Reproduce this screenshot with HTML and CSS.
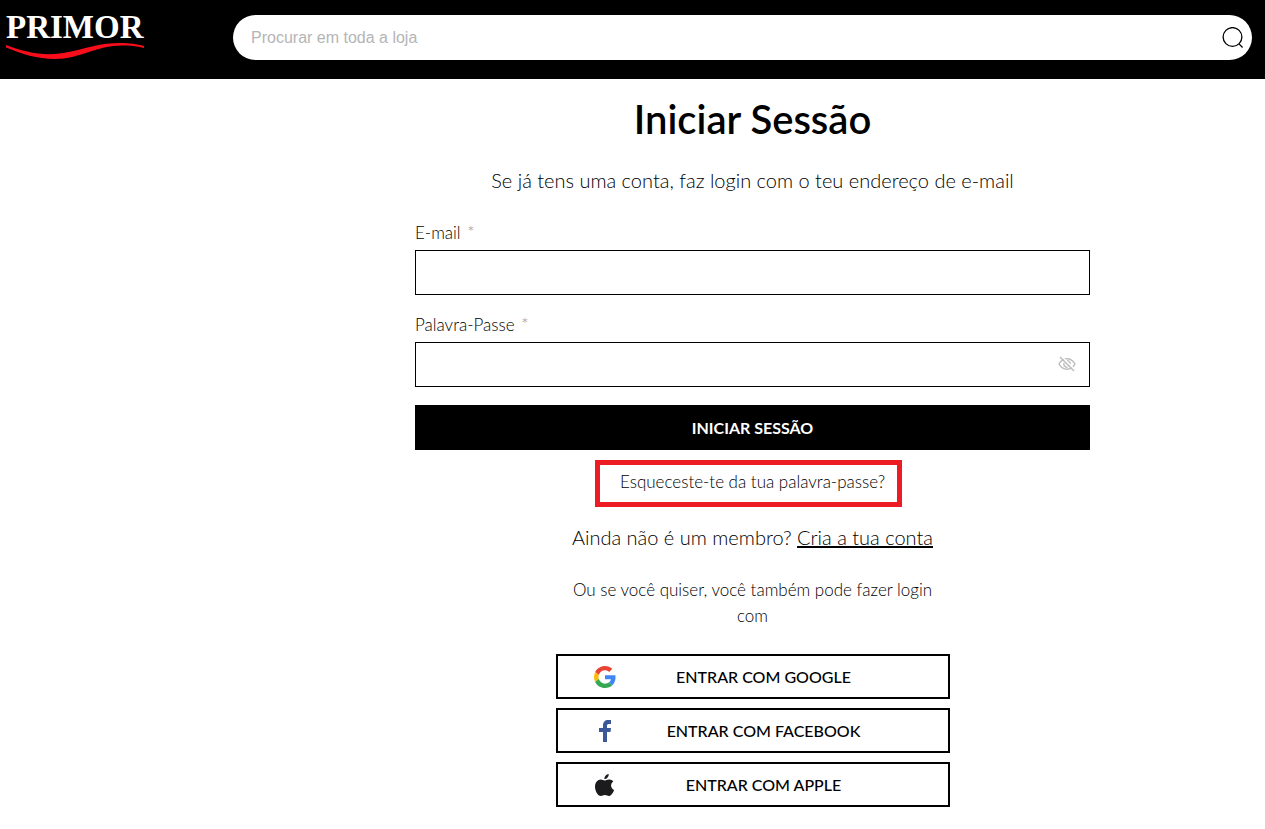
FILE: index.html
```html
<!DOCTYPE html>
<html lang="pt">
  <head>
    <meta charset="UTF-8" />
    <meta name="viewport" content="width=device-width, initial-scale=1.0" />
    <title>Iniciar Sessão</title>
    <link rel="stylesheet" href="styles.css">
  </head>
  <body>
    <header class="header">
      <a class="logo" href="#">
        <span class="logo-name">PRIMOR</span>
        <svg class="logo-wave" viewBox="0 0 138 17" aria-hidden="true">
          <path d="M0 2C16 8 31 12 49 11C72 9 88 0 114 0C124 0 131 1 138 3V5C130 3 124 2.500 116 2.500C90 2.500 74 16 49 16C31 16 16 11 0 4.500Z" fill="#f80d1b" />
        </svg>
      </a>
      <form class="search">
        <input class="search-input" type="search" placeholder="Procurar em toda a loja" aria-label="Procurar em toda a loja" />
        <button class="search-button" type="button" aria-label="Procurar">
          <svg width="22" height="22" viewBox="0 0 22 22" fill="none" stroke="#000" stroke-width="1.3">
            <circle cx="10.5" cy="10" r="9.4" />
            <path d="M17 16.900L20.600 20.500" />
          </svg>
        </button>
      </form>
    </header>

    <main class="main">
      <h1>Iniciar Sessão</h1>
      <p class="intro">Se já tens uma conta, faz login com o teu endereço de e-mail</p>

      <form class="login-form">
        <label for="email">E-mail <span class="required">*</span></label>
        <input class="field" type="email" id="email" required />

        <label for="password">Palavra-Passe <span class="required">*</span></label>
        <div class="password-box">
          <input class="field" type="password" id="password" required />
          <button class="toggle" type="button" aria-label="Mostrar palavra-passe">
            <svg width="18" height="16" viewBox="0 0 18 16" fill="none" stroke="#bdbdbd" stroke-width="1.5">
              <path d="M1 8C3 4.4 5.8 2.8 9 2.8S15 4.4 17 8C15 11.600 12.200 13.200 9 13.200S3 11.600 1 8Z" />
              <path d="M9 4.800A3.200 3.200 0 0 1 11.400 10.100M9.500 11.200A3.200 3.200 0 0 1 6 7" />
              <path stroke="#fff" d="M3.200 0L17 14" />
              <path d="M2 1L16 15" />
            </svg>
          </button>
        </div>

        <button class="submit" type="button">INICIAR SESSÃO</button>
      </form>

      <a class="forgot" href="#">Esqueceste-te da tua palavra-passe?</a>
      <p class="signup">Ainda não é um membro? <a href="#">Cria a tua conta</a></p>

      <div class="social">
        <p class="social-text">Ou se você quiser, você também pode fazer login com</p>
        <button class="social-button" type="button">
          <svg width="22" height="22" viewBox="0 0 48 48">
            <path fill="#EA4335" d="M24 9.500c3.540 0 6.710 1.220 9.210 3.600l6.850-6.850C35.900 2.380 30.470 0 24 0 14.620 0 6.510 5.380 2.560 13.220l7.980 6.190C12.430 13.720 17.740 9.500 24 9.500z" />
            <path fill="#4285F4" d="M46.980 24.550c0-1.570-.150-3.090-.380-4.550H24v9.020h12.940c-.580 2.960-2.260 5.480-4.780 7.180l7.730 6c4.510-4.180 7.090-10.360 7.090-17.650z" />
            <path fill="#FBBC05" d="M10.530 28.590A14.500 14.500 0 0 1 9.770 24c0-1.600.270-3.140.760-4.590l-7.980-6.190A23.900 23.900 0 0 0 0 24c0 3.880.920 7.540 2.560 10.780l7.970-6.190z" />
            <path fill="#34A853" d="M24 48c6.480 0 11.930-2.130 15.890-5.810l-7.730-6c-2.150 1.450-4.920 2.300-8.160 2.300-6.260 0-11.570-4.220-13.470-9.910l-7.980 6.190C6.510 42.620 14.620 48 24 48z" />
          </svg>
          <span>ENTRAR COM GOOGLE</span>
        </button>
        <button class="social-button" type="button">
          <svg width="22" height="22" viewBox="0 0 22 22">
            <path fill="#3b5998" d="M9 22V12H5V8H9V5.500C9 2 11 0 14.200 0H17V4H15C13.600 4 13 4.600 13 6V8H17L16.500 12H13V22Z" />
          </svg>
          <span>ENTRAR COM FACEBOOK</span>
        </button>
        <button class="social-button" type="button">
          <svg width="22" height="22" viewBox="0 0 22 22">
            <path fill="#1b1b1d" d="M14.700 0C14.900 2.800 12.800 5.100 10.400 5.100C10.100 2.500 12.400.300 14.700 0Z" />
            <path fill="#1b1b1d" d="M10.700 6.500C11.600 6.500 13.200 5.300 15.300 5.400C17.100 5.500 18.500 6.200 19.400 7.500C16 9.600 16.400 14.500 20.100 16C19.300 18.300 17.400 21.800 15.300 22C13.700 22.100 12.900 21 11 21C9.100 21 8.200 22 6.800 22C3.900 22 1 17 1 12.700C1 8.300 3.800 5.600 6.700 5.500C8.400 5.500 9.700 6.500 10.700 6.500Z" />
          </svg>
          <span>ENTRAR COM APPLE</span>
        </button>
      </div>
    </main>
  </body>
</html>
```
FILE: styles.css
```css
* {
  box-sizing: border-box;
}

body {
  margin: 0;
  background-color: #fff;
  color: #000;
  font-family: Lato, "Open Sans", sans-serif;
  font-size: 17px;
  font-weight: 300;
  line-height: 26px;
}

button {
  font-family: inherit;
  font-size: 16px;
  cursor: pointer;
}

.header {
  display: flex;
  align-items: flex-start;
  gap: 89px;
  padding: 15px 13px 19px 6px;
  background-color: #000;
}

.logo {
  width: 138px;
  color: #fff;
  text-decoration: none;
}

.logo-name {
  display: block;
  margin-bottom: 4px;
  font-family: "Liberation Serif", serif;
  font-size: 33px;
  font-weight: bold;
  line-height: 24px;
}

.logo-wave {
  display: block;
  width: 138px;
  height: 17px;
}

.search {
  display: flex;
  flex: 1;
  align-items: center;
  height: 45px;
  padding: 0 8px 0 18px;
  border-radius: 23px;
  background-color: #fff;
}

.search-input {
  flex: 1;
  padding: 0;
  border: none;
  outline: none;
  font-family: "Liberation Sans", Arial, sans-serif;
  font-size: 16px;
}

.search-input::placeholder {
  color: #b5b5b5;
}

.search-button,
.toggle {
  display: flex;
  padding: 0;
  border: none;
  background: none;
}

.main {
  display: flex;
  flex-direction: column;
  align-items: center;
  padding: 16px 0 22px 240px;
}

h1 {
  margin: 0;
  font-size: 40px;
  font-weight: 600;
  line-height: 48px;
}

.intro {
  margin: 24px 0 27px;
  font-size: 20px;
}

.login-form {
  width: 100%;
  max-width: 675px;
}

label {
  display: block;
  margin-bottom: 4px;
}

.required {
  margin-left: 2px;
  color: #999;
}

.field {
  display: block;
  width: 100%;
  height: 45px;
  margin-bottom: 17px;
  padding: 0 12px;
  border: 1px solid #000;
  border-radius: 0;
  font-size: 16px;
}

.password-box {
  position: relative;
  margin-bottom: 18px;
}

.toggle {
  position: absolute;
  top: 14px;
  right: 14px;
}

.submit {
  display: block;
  width: 100%;
  height: 45px;
  border: none;
  background-color: #000;
  color: #fff;
  font-weight: 700;
}

.forgot {
  margin: 10px 8px 0 0;
  padding: 4px 12px 7px 20px;
  border: 5px solid #ed1c24;
  color: #000;
  text-decoration: none;
}

.signup {
  margin: 17px 0 27px;
  font-size: 20px;
}

.signup a {
  color: #000;
}

.social {
  display: flex;
  flex-direction: column;
  gap: 9px;
  width: 100%;
  max-width: 394px;
}

.social-text {
  margin: 0 0 16px;
  text-align: center;
}

.social-button {
  display: flex;
  align-items: center;
  height: 45px;
  padding: 0 36px;
  border: 2px solid #000;
  background-color: #fff;
  color: #000;
  font-weight: 500;
}

.social-button span {
  flex: 1;
  text-align: center;
}
```
